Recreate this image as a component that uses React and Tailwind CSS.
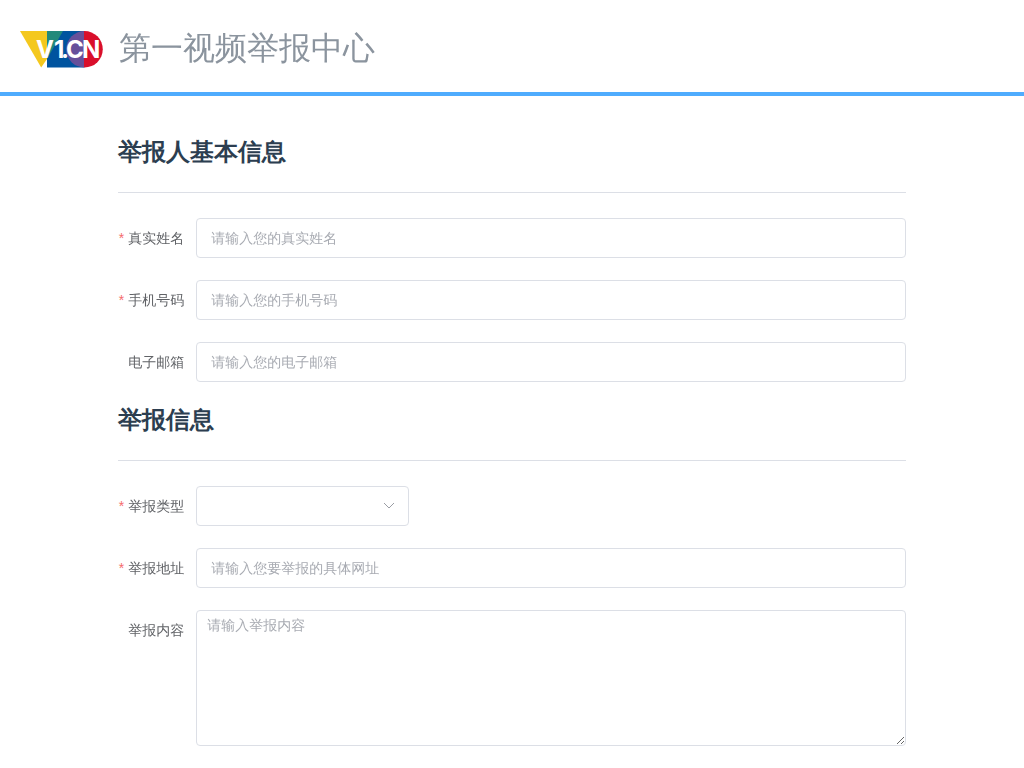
import { useState } from "react";

function Logo() {
  return (
    <svg viewBox="0 0 84 38" className="h-[38px] w-[84px] shrink-0" role="img" aria-label="V1.CN">
      <path d="M0 1H46L21.200 37.500Z" fill="#f4c81e" />
      <path d="M27 1H64V37.500H27Z" fill="#00549f" />
      <path d="M27 1H43L27 29Z" fill="#22897a" />
      <path d="M64.500 1A18.250 18.250 0 0 0 64.500 37.500Z" fill="#66509a" />
      <path d="M64 1H64.500A18.250 18.250 0 0 1 64.500 37.500H64Z" fill="#d90f2b" />
      <text
        x="16 34 41 46 62"
        y="28"
        fill="#fff"
        fontFamily="Inter, 'Liberation Sans', sans-serif"
        fontWeight="700"
        fontSize="24"
      >
        V1.CN
      </text>
    </svg>
  );
}

function SectionTitle({ children }) {
  return (
    <h2 className="mb-[25px] border-b border-[#dcdfe6] pb-6 font-['Liberation_Sans',Arial,sans-serif] text-2xl leading-8 font-bold text-[#2c3e50]">
      {children}
    </h2>
  );
}

function Field({ id, label, required, children }) {
  return (
    <div className="mb-[22px] flex items-start">
      <label htmlFor={id} className="w-[78px] shrink-0 pr-3 text-right text-sm leading-10 text-[#606266]">
        {required && <span className="mr-1 text-[#f56c6c]">*</span>}
        {label}
      </label>
      <div className="min-w-0 flex-1">{children}</div>
    </div>
  );
}

const control =
  "block w-full rounded-sm border border-[#dcdfe6] bg-white text-sm text-[#606266] placeholder:text-[#a8abb2] outline-none focus:border-[#409eff]";

function TextField({ id, label, required, placeholder, type = "text" }) {
  return (
    <Field id={id} label={label} required={required}>
      <input id={id} type={type} required={required} placeholder={placeholder} className={`${control} h-10 px-3.5`} />
    </Field>
  );
}

export default function App() {
  const [kind, setKind] = useState("");
  return (
    <div className="bg-white font-['Liberation_Sans','WenQuanYi_Zen_Hei','WenQuanYi_Micro_Hei','Droid_Sans_Fallback','Noto_Sans_CJK_SC',sans-serif] antialiased">
      <header className="flex h-24 items-center gap-[15px] border-b-4 border-[#4facfe] px-5 pt-1">
        <a href="/" className="mt-0.5">
          <Logo />
        </a>
        <h1 className="text-[32px] leading-10 text-[#8b949e]">第一视频举报中心</h1>
      </header>
      <main className="mx-auto w-10/13 pt-10">
        <form>
          <SectionTitle>举报人基本信息</SectionTitle>
          <TextField id="name" label="真实姓名" required placeholder="请输入您的真实姓名" />
          <TextField id="phone" label="手机号码" required type="tel" placeholder="请输入您的手机号码" />
          <TextField id="email" label="电子邮箱" type="email" placeholder="请输入您的电子邮箱" />
          <SectionTitle>举报信息</SectionTitle>
          <Field id="kind" label="举报类型" required>
            <div className="relative w-[213px]">
              <select
                id="kind"
                required
                value={kind}
                onChange={(e) => setKind(e.target.value)}
                className={`${control} h-10 appearance-none pr-8 pl-3.5`}
              >
                <option value=""></option>
              </select>
              <svg viewBox="0 0 12 12" className="pointer-events-none absolute top-3.5 right-3.5 size-3" fill="none" stroke="#9a9da4" aria-hidden="true">
                <path d="M1 3L6 8L11 3" />
              </svg>
            </div>
          </Field>
          <TextField id="url" label="举报地址" required placeholder="请输入您要举报的具体网址" />
          <Field id="content" label="举报内容">
            <textarea id="content" placeholder="请输入举报内容" className={`${control} h-[136px] resize-y px-2.5 py-1 leading-5`} />
          </Field>
        </form>
      </main>
    </div>
  );
}
